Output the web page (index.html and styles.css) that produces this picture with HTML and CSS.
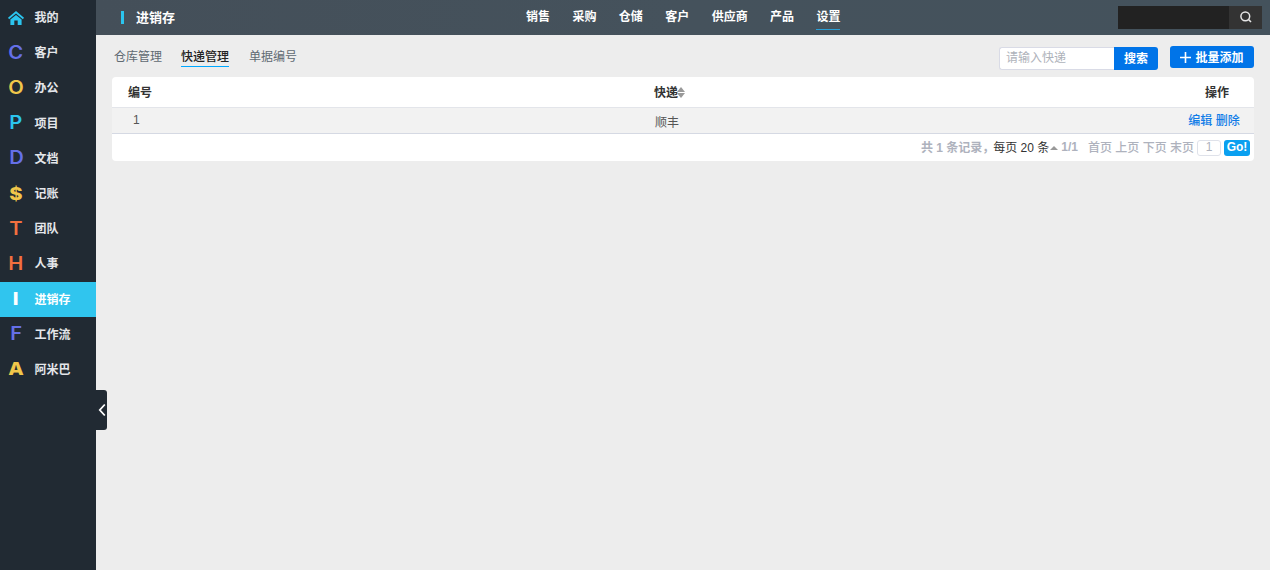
FILE: index.html
```html
<!DOCTYPE html>
<html lang="zh">
<head>
<meta charset="utf-8">
<title>进销存</title>
<link rel="stylesheet" href="styles.css">
</head>
<body>
<div class="app">
  <aside class="sidebar">
    <a class="side-item"><span class="side-icon"><svg class="home" viewBox="0 0 16 14" width="16" height="14"><path fill="#2bc4ee" d="M8 0 L0 6.8 L1.1 8.2 L8 2.5 L14.9 8.2 L16 6.8 Z M2.4 8.6 L8 4 L13.6 8.6 V14 H9.7 V9.6 H6.3 V14 H2.4 Z"/></svg></span><span class="side-label">我的</span></a>
    <a class="side-item"><span class="side-icon c-blue"><b>C</b></span><span class="side-label">客户</span></a>
    <a class="side-item"><span class="side-icon c-yellow"><b>O</b></span><span class="side-label">办公</span></a>
    <a class="side-item"><span class="side-icon c-cyan"><b>P</b></span><span class="side-label">项目</span></a>
    <a class="side-item"><span class="side-icon c-blue"><b>D</b></span><span class="side-label">文档</span></a>
    <a class="side-item"><span class="side-icon c-yellow heavy"><b>$</b></span><span class="side-label">记账</span></a>
    <a class="side-item"><span class="side-icon c-orange"><b>T</b></span><span class="side-label">团队</span></a>
    <a class="side-item"><span class="side-icon c-orange"><b>H</b></span><span class="side-label">人事</span></a>
    <a class="side-item active"><span class="side-icon heavy"><b>I</b></span><span class="side-label">进销存</span></a>
    <a class="side-item"><span class="side-icon c-blue"><b>F</b></span><span class="side-label">工作流</span></a>
    <a class="side-item"><span class="side-icon c-yellow heavy"><b>A</b></span><span class="side-label">阿米巴</span></a>
    <div class="collapse"><svg viewBox="0 0 8 14" width="8" height="14"><path d="M6.8 1.5 L1.8 7 L6.8 12.5" fill="none" stroke="#fff" stroke-width="1.8"/></svg></div>
  </aside>
  <div class="main">
    <header class="topbar">
      <div class="brand"><i class="brand-bar"></i><span class="lift">进销存</span></div>
      <nav class="nav">
        <a>销售</a><a>采购</a><a>仓储</a><a>客户</a><a>供应商</a><a>产品</a><a class="current">设置</a>
      </nav>
      <div class="top-search">
        <div class="top-input"></div>
        <div class="top-btn"><svg viewBox="0 0 14 14" width="14" height="14"><circle cx="6.3" cy="6.3" r="4.4" fill="none" stroke="#e6e6e6" stroke-width="1.5"/><path d="M9.5 9.5 L12 12" stroke="#e6e6e6" stroke-width="1.6"/></svg></div>
      </div>
    </header>
    <section class="content">
      <div class="toolbar">
        <div class="tabs">
          <a>仓库管理</a><a class="on">快递管理</a><a>单据编号</a>
        </div>
        <div class="actions">
          <div class="search"><span class="search-input">请输入快递</span><span class="search-btn">搜索</span></div>
          <a class="add"><svg viewBox="0 0 11 11" width="11" height="11"><path d="M5.5 0 V11 M0 5.5 H11" stroke="#fff" stroke-width="1.6"/></svg><span class="lift">批量添加</span></a>
        </div>
      </div>
      <div class="panel">
        <div class="row head">
          <div class="col-id">编号</div>
          <div class="col-name">快递<span class="sort"><i class="up"></i><i class="down"></i></span></div>
          <div class="col-op">操作</div>
        </div>
        <div class="row body">
          <div class="col-id num">1</div>
          <div class="col-name">顺丰</div>
          <div class="col-op links"><a>编辑</a> <a>删除</a></div>
        </div>
        <div class="pager">
          <span class="muted">共 1 条记录，</span><span class="dark">每页 20 条</span><i class="caret"></i><span class="muted">1/1</span>
          <span class="muted pages">首页 上页 下页 末页</span>
          <span class="page-box">1</span><span class="go">Go!</span>
        </div>
      </div>
    </section>
  </div>
</div>
</body>
</html>
```
FILE: styles.css
```css
* { box-sizing: border-box; }
html, body { margin: 0; height: 100%; overflow: hidden; }
body {
  font-family: "Liberation Sans", "Noto Sans CJK SC", sans-serif;
  font-size: 12px;
  color: #333;
  background: #ededed;
}
a { text-decoration: none; }
.lift { padding-bottom: 2px; }
.app { display: flex; height: 570px; }

.sidebar { position: relative; width: 96px; flex: none; background: #212a33; }
.side-item {
  display: flex; align-items: center; height: 35.2px;
  color: #e4e6ea; font-weight: 700; font-size: 12px;
}
.side-label { padding-bottom: 2px; margin-left: -0.5px; }
.side-item.active { background: #30c5ee; color: #fff; }
.side-icon {
  width: 35px; padding-right: 3px; flex: none;
  display: flex; justify-content: center; align-items: center;
  font-family: "Inter", sans-serif; font-size: 18px; font-weight: 600; line-height: 1;
}
.side-icon b { display: block; font-weight: inherit; transform: scaleX(1.12); }
.side-icon.heavy { font-weight: 800; }
.c-blue { color: #6570e8; }
.c-yellow { color: #f0c64a; }
.c-cyan { color: #2bc4ee; }
.c-orange { color: #f2703f; }
.collapse {
  position: absolute; left: 96px; top: 390px; width: 11px; height: 40px;
  background: #212a33; border-radius: 0 3px 3px 0;
  display: flex; align-items: center; justify-content: center;
}

.main { flex: 1; min-width: 0; display: flex; flex-direction: column; }
.topbar {
  height: 35px; flex: none; display: flex; align-items: center;
  padding: 0 8px 0 25px;
  background: linear-gradient(90deg, #444f59, #45525c 50%, #44525c);
  color: #fff; font-weight: 700;
}
.brand { width: 405px; flex: none; display: flex; align-items: center; font-size: 13px; }
.brand-bar { width: 3px; height: 13px; background: #2bc4ee; margin-right: 12px; }
.nav { display: flex; gap: 22.4px; height: 35px; align-items: flex-start; }
.nav a { display: block; line-height: 17px; margin-top: 9px; color: #fff; }
.nav a.current { height: 21px; border-bottom: 1px solid #2a9fd6; }
.top-search { margin-left: auto; display: flex; height: 23px; margin-top: -0.5px; }
.top-input { width: 111px; background: #222; }
.top-btn { width: 33px; background: #333; display: flex; align-items: center; justify-content: center; }

.content { flex: 1; padding: 11px 16px 0; }
.toolbar { display: flex; justify-content: space-between; height: 31px; }
.tabs { display: flex; gap: 19px; padding: 2px 0 0 2px; align-items: flex-start; }
.tabs a { color: #606a72; height: 19px; padding-top: 1px; line-height: 16px; display: block; }
.tabs a.on { color: #222; border-bottom: 1px solid #00a8ff; font-weight: 500; margin-right: 1px; }
.actions { display: flex; gap: 12px; align-items: flex-start; }
.search { display: flex; height: 23px; margin-top: 1px; }
.search-input {
  width: 115px; padding-left: 6px; line-height: 21px;
  background: #fff; border: 1px solid #d9dbe6; border-right: 0;
  border-radius: 3px 0 0 3px; color: #aeb2ba;
}
.search-btn {
  width: 44px; background: #0074e8; color: #fff; font-weight: 700; text-align: center;
  line-height: 25px; border-radius: 0 3px 3px 0;
}
.add {
  width: 84px; height: 22px; background: #0074e8; color: #fff; font-weight: 700;
  border-radius: 3px; display: flex; align-items: center; justify-content: center; gap: 4px;
}
.panel { background: #fff; border-radius: 4px; overflow: hidden; }
.row { display: flex; align-items: center; }
.head { height: 31px; border-bottom: 1px solid #e3e5ea; font-weight: 700; color: #333; padding-bottom: 2px; }
.body { height: 26px; background: #f2f2f2; border-bottom: 1px solid #d5d9e3; color: #555; }
.col-id { width: 542px; padding-left: 16px; flex: none; }
.num { padding-left: 21px; margin-top: -2px; }
.col-name { flex: 1; }
.col-op { flex: none; text-align: center; white-space: nowrap; }
.head .col-op { width: 28px; margin-right: 23px; }
.body .col-op { width: 60px; margin-right: 10px; margin-top: -2px; }
.body .col-name { margin-top: 2px; padding-left: 1px; }
.links a { color: #0f7ce8; font-weight: 500; }
.sort { display: inline-flex; flex-direction: column; gap: 1px; vertical-align: middle; margin-top: -1px; margin-left: -1px; }
.sort i { display: block; width: 0; height: 0; border-left: 4px solid transparent; border-right: 4px solid transparent; }
.sort .up { border-bottom: 5px solid #999; }
.sort .down { border-top: 5px solid #999; }
.pager {
  height: 27px; display: flex; align-items: center; justify-content: flex-end; padding-right: 4px;
  white-space: pre;
}
.pager > .muted, .pager > .dark { padding-bottom: 2px; }
.muted { color: #aeb2bd; font-weight: 700; }
.dark { color: #333; margin-left: -1px; }
.caret { width: 0; height: 0; border-left: 4px solid transparent; border-right: 4px solid transparent; border-bottom: 4px solid #999; margin: 0 3px 0 1px; }
.pages { margin-left: 10px; font-weight: 500; }
.page-box {
  width: 24px; height: 16px; margin-left: 3px; margin-right: 3px; line-height: 12px; text-align: center;
  border: 1px solid #dfe2ea; border-radius: 3px; color: #aeb2bd;
}
.go {
  width: 26px; height: 16px; background: #0aa0f0; color: #fff; font-weight: 700;
  text-align: center; line-height: 15px; border-radius: 3px;
}
```
